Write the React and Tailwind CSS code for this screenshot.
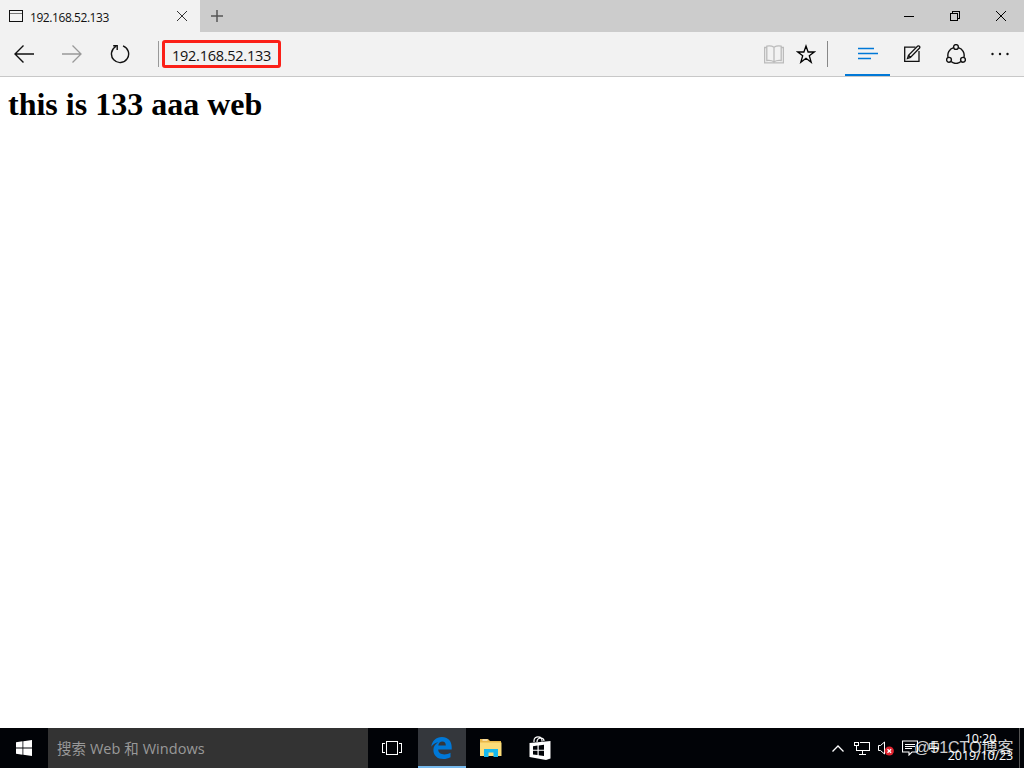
const UI_FONT = "font-['Open_Sans','Noto_Sans_CJK_SC',sans-serif]"

function TabBar() {
  return (
    <div className="flex h-8 shrink-0 bg-[#cccccc]">
      <div className="flex w-[200px] items-center bg-[#f2f2f2] pl-[9px]">
        <svg width="14" height="12" viewBox="0 0 14 12" fill="none" shapeRendering="crispEdges">
          <rect x="0.5" y="0.5" width="13" height="11" stroke="#111" />
          <path d="M1 3.5h12" stroke="#777" />
        </svg>
        <span className="ml-[7px] mt-[3px] text-[12px] leading-4 tracking-[-0.43px] text-[#111]">192.168.52.133</span>
        <svg className="ml-auto mr-[13px]" width="10" height="10" viewBox="0 0 10 10" stroke="#333">
          <path d="M0 0l10 10M10 0L0 10" />
        </svg>
      </div>
      <div className="flex items-center pl-[11px]">
        <svg width="12" height="12" viewBox="0 0 12 12" stroke="#555" strokeWidth="1.5">
          <path d="M6 0v12M0 6h12" />
        </svg>
      </div>
      <div className="ml-auto flex">
        <div className="flex w-[46px] items-center justify-center">
          <svg width="10" height="10" viewBox="0 0 10 10" stroke="#000" shapeRendering="crispEdges">
            <path d="M0 5.5h10" />
          </svg>
        </div>
        <div className="flex w-[46px] items-center justify-center">
          <svg width="10" height="10" viewBox="0 0 10 10" fill="none" stroke="#000" shapeRendering="crispEdges">
            <rect x="0.5" y="2.5" width="7" height="7" />
            <path d="M2.5 2V0.5h7v7H8" />
          </svg>
        </div>
        <div className="flex w-[46px] items-center justify-center">
          <svg width="10" height="10" viewBox="0 0 10 10" stroke="#000">
            <path d="M0 0l10 10M10 0L0 10" />
          </svg>
        </div>
      </div>
    </div>
  )
}

function Toolbar() {
  return (
    <div className="flex h-[45px] shrink-0 items-center border-b border-[#c8c8c8] bg-[#f2f2f2]">
      {/* Navigation */}
      <div className="flex w-12 justify-center">
        <svg width="20" height="18" viewBox="0 0 20 18" fill="none" stroke="#111" strokeWidth="1.4">
          <path d="M20 9H1M9.5 0.5L1 9l8.5 8.5" />
        </svg>
      </div>
      <div className="flex w-12 justify-center">
        <svg width="20" height="18" viewBox="0 0 20 18" fill="none" stroke="#999" strokeWidth="1.3">
          <path d="M0 9h19M10.5 0.5L19 9l-8.5 8.5" />
        </svg>
      </div>
      <div className="flex w-12 justify-center">
        <svg width="20" height="20" viewBox="0 0 20 20" fill="none" stroke="#111" strokeWidth="1.4">
          <path d="M13 1.9A8.6 8.6 0 1 1 5.8 2.5M3.2 1.8h4v4.2" />
        </svg>
      </div>

      {/* Address */}
      <div className="ml-[14px] h-[26px] w-px bg-[#999]" />
      <div className="ml-[3px] mb-px flex h-7 w-[119px] items-center rounded-[3px] border-[3px] border-[#fb2018] pl-[7px]">
        <span className="mt-[5px] text-[14.5px] leading-5 tracking-[-0.26px] text-[#111]">192.168.52.133</span>
      </div>

      {/* Actions */}
      <div className="ml-auto flex h-full items-center">
        <svg className="mr-3" width="20" height="19" viewBox="0 0 20 19" fill="none" stroke="#bbb" strokeWidth="1.3">
          <path d="M2.8 2.5H0.6v15.3h18.8V2.5h-2.2M10 17V2.3C8 1 5 0.8 2.8 1.2v14.300C5 15.200 8 15.500 10 16.800c2-1.300 5-1.600 7.200-1.300V1.200C15 0.800 12 1 10 2.300" />
        </svg>
        <svg width="20" height="20" viewBox="0 0 20 20" fill="none" stroke="#000" strokeWidth="1.3">
          <path d="M10 2l2.1 6h6.2l-5 3.7 1.9 6.6-5.2-4-5.2 4 1.9-6.6-5-3.7h6.2z" />
        </svg>
        <div className="ml-[11px] h-[26px] w-px bg-[#888]" />
        <div className="ml-[17px] flex h-full w-[45px] items-start justify-center border-b-2 border-[#0078d7] pt-[15px]">
          <svg width="20" height="13" viewBox="0 0 20 13" stroke="#0078d7" strokeWidth="1.3">
            <path d="M0 1.5h16M0 6.5h20M0 11.5h13" />
          </svg>
        </div>
        <div className="flex w-11 justify-center">
          <svg width="18" height="18" viewBox="0 0 18 18" fill="none" stroke="#111" strokeWidth="1.3">
            <path d="M12.5 2.2H1.7v14.1H16V6" />
            <path d="M4.5 13.5l1-3.2 9.2-9.2c1.3-.8 2.700.6 1.900 1.900L7.400 12.400zM5.500 10.300l2 2" />
          </svg>
        </div>
        <div className="flex w-11 justify-center">
          <svg width="20" height="20" viewBox="0 0 20 20" fill="none" stroke="#111" strokeWidth="1.4">
            <circle cx="10" cy="3" r="2.4" />
            <circle cx="3" cy="15.8" r="2.4" />
            <circle cx="17" cy="15.8" r="2.4" />
            <path d="M7.6 3.6A8.2 8.2 0 0 0 2.1 13.5M12.4 3.6a8.2 8.2 0 0 1 5.500 9.900M5 17.500a8.200 8.200 0 0 0 10 0" />
          </svg>
        </div>
        <div className="flex w-[46px] justify-center pr-[2px]">
          <svg width="20" height="4" viewBox="0 0 20 4" fill="#111">
            <circle cx="2.5" cy="2" r="1.2" />
            <circle cx="10" cy="2" r="1.2" />
            <circle cx="17.5" cy="2" r="1.2" />
          </svg>
        </div>
      </div>
    </div>
  )
}

function EdgeIcon() {
  return (
    <svg className="mt-[2px] mr-px" width="21" height="22" viewBox="0 0 21 22" fill="#0078d7">
      <path d="M0.3 9.7C1 3.8 5.1 0 10.9 0 17 0 20.7 4.3 20.7 10v2.5H7.2c.2 3.3 2.8 4.9 6.1 4.9 2.3 0 4.3-.6 6.2-1.7v4.500c-2.200 1.200-4.600 1.800-7.200 1.800-6 0-9.900-3.400-9.900-9 0-3.500 1.800-6.200 4.900-7.800C4.500 5.800 1.900 7.200.3 9.700zM7.300 8.600h7.500c0-2.500-1.200-4-3.500-4-2.200 0-3.600 1.600-4 4z" />
    </svg>
  )
}

function Taskbar() {
  return (
    <div className="relative flex h-10 shrink-0 bg-[#010307] text-white">
      <div className="flex w-12 items-center justify-center">
        <svg width="16" height="16" viewBox="0 0 16 16" fill="#fff">
          <path d="M0 2.2L6.5 1.3V7.5H0zM7.3 1.2L16 0v7.5H7.3zM0 8.4h6.5v6.3L0 13.8zM7.3 8.4H16V16l-8.7-1.2z" />
        </svg>
      </div>
      <div className="flex w-80 items-center bg-[#333333] pt-[2px] pl-[9px] text-[14.5px] text-[#999]">
        <span className="whitespace-pre tracking-[0.05px]">搜索 Web 和 Windows</span>
      </div>
      <div className="flex w-[50px] items-center justify-center pr-[2px]">
        <svg width="20" height="14" viewBox="0 0 20 14" fill="none" stroke="#fff" shapeRendering="crispEdges">
          <rect x="4.5" y="0.5" width="11" height="13" />
          <path d="M3 2.5H0.5v9H3M17 2.5h2.5v9H17" />
        </svg>
      </div>
      <div className="flex w-12 items-center justify-center border-b-2 border-[#76b9ed] bg-[#34373c]">
        <EdgeIcon />
      </div>
      <div className="flex w-12 items-center justify-center pl-px">
        <svg width="22" height="18" viewBox="0 0 22 18">
          <path d="M0 0h8l2 2h11v15H0z" fill="#e9b84a" />
          <path d="M0 3.500h21.500V17H0z" fill="#fbdc79" />
          <path d="M2.500 1h5" stroke="#fff" />
          <path d="M4 10h14v8h-4.500v-4.500h-5V18H4z" fill="#16b9ee" />
        </svg>
      </div>
      <div className="flex w-12 items-center justify-center pl-[3px]">
        <svg width="22" height="24" viewBox="0 0 22 24">
          <path d="M5 6V4.500C5 2 7 .8 9 .8c2.500 0 4 1.400 4 3.700v1M8 6C8 3 10 2 12 2c2 0 3 1 3 3" fill="none" stroke="#fff" strokeWidth="1.200" />
          <path d="M.5 7L21.500 5v17.500L17 24 .5 21z" fill="#fff" />
          <path d="M4 10.200l4.500-.6v4.200H4zM9.700 9.400l5.300-.7v5.100H9.700zM4 14.800h4.500V19L4 18.400zM9.700 14.800H15v5.100l-5.300-.7z" fill="#010307" />
        </svg>
      </div>

      {/* Tray */}
      <div className="ml-auto flex items-center">
        <svg className="mr-[10px]" width="12" height="7" viewBox="0 0 12 7" fill="none" stroke="#fff" strokeWidth="1.3">
          <path d="M0.500 6.500L6 1l5.500 5.500" />
        </svg>
        <svg className="mr-2" width="16" height="14" viewBox="0 0 16 14" fill="none" stroke="#fff" shapeRendering="crispEdges">
          <path d="M6 1.500h9.500v8H2.500V5M8.500 10v3M5 13.500h7" />
          <rect x="0.500" y="1.500" width="4" height="3" />
        </svg>
        <svg className="mr-2" width="16" height="16" viewBox="0 0 16 16" fill="none">
          <path d="M.5 5.500h2l4-3.500v12l-4-3.500h-2z" stroke="#fff" />
          <circle cx="11.300" cy="11" r="4.600" fill="#e02530" />
          <path d="M9.500 9.200l3.600 3.600M13.100 9.200l-3.600 3.600" stroke="#fff" strokeWidth="1.300" />
        </svg>
        <svg className="mr-[10px]" width="16" height="16" viewBox="0 0 16 16" fill="none" stroke="#fff" strokeWidth="1.100">
          <path d="M.5 1h15v11H10l-3 3v-3H.5zM3 4.500h10M3 6.500h10M3 8.500h7" />
        </svg>
        <span className="w-3 text-xs">中</span>
        <div className="mr-[5px] mb-[2px] ml-[7px] flex w-[67px] flex-col items-center text-[12.5px] leading-[17px] tracking-[-0.1px] whitespace-nowrap">
          <span>10:20</span>
          <span>2019/10/23</span>
        </div>
        <div className="h-full w-[5px] border-l border-[#555]" />
      </div>
      <span className="absolute top-[10px] left-[914px] whitespace-nowrap font-['Liberation_Sans','Noto_Sans_CJK_SC',sans-serif] text-[16px] leading-5 text-white/80">@51CTO博客</span>
    </div>
  )
}

export default function App() {
  return (
    <div className={`flex h-screen flex-col overflow-hidden bg-white ${UI_FONT}`}>
      <TabBar />
      <Toolbar />
      <main className="flex-1 px-2 pt-[9px]">
        <h1 className="font-['Liberation_Serif',serif] text-[32px] leading-[37px] font-bold text-black">this is 133 aaa web</h1>
      </main>
      <Taskbar />
    </div>
  )
}
